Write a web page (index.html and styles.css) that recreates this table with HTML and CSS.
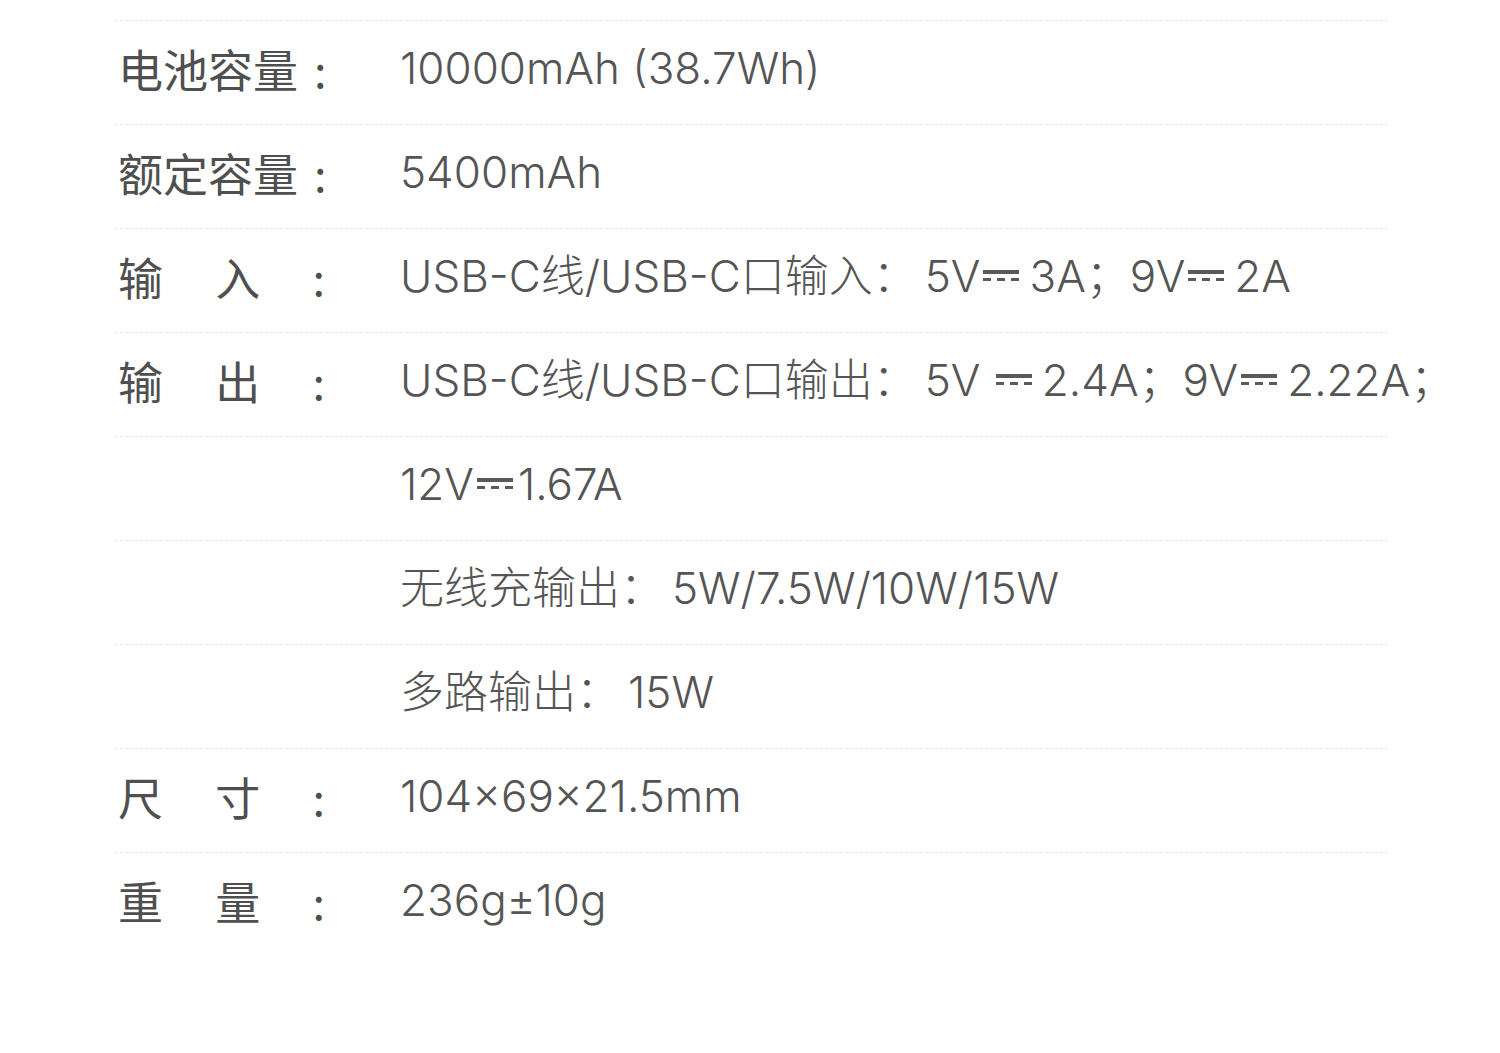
FILE: index.html
```html
<!DOCTYPE html>
<html lang="zh-CN">
<head>
<meta charset="utf-8">
<link rel="stylesheet" href="styles.css">
</head>
<body>
<div class="specs">
  <div class="row">
    <div class="label"><span>电池容量</span><span class="colon">:</span></div>
    <div class="value">10000mAh (38.7Wh)</div>
  </div>
  <div class="row">
    <div class="label"><span>额定容量</span><span class="colon">:</span></div>
    <div class="value">5400mAh</div>
  </div>
  <div class="row">
    <div class="label spread"><span>输</span><span>入</span><span>:</span></div>
    <div class="value">USB-C线/USB-C口输入：<span class="gap"></span>5V<i class="dc"></i>3A；9V<i class="dc"></i>2A</div>
  </div>
  <div class="row">
    <div class="label spread"><span>输</span><span>出</span><span>:</span></div>
    <div class="value">USB-C线/USB-C口输出：<span class="gap"></span>5V <i class="dc"></i>2.4A；9V<i class="dc"></i>2.22A；</div>
  </div>
  <div class="row">
    <div class="label"></div>
    <div class="value">12V<i class="dc tight"></i>1.67A</div>
  </div>
  <div class="row">
    <div class="label"></div>
    <div class="value">无线充输出：<span class="gap"></span>5W/7.5W/10W/15W</div>
  </div>
  <div class="row">
    <div class="label"></div>
    <div class="value">多路输出：<span class="gap"></span>15W</div>
  </div>
  <div class="row">
    <div class="label spread"><span>尺</span><span>寸</span><span>:</span></div>
    <div class="value">104×69×21.5mm</div>
  </div>
  <div class="row last">
    <div class="label spread"><span>重</span><span>量</span><span>:</span></div>
    <div class="value">236g±10g</div>
  </div>
</div>
</body>
</html>
```
FILE: styles.css
```css
html, body {
  margin: 0;
  padding: 0;
  background: #ffffff;
}
body {
  font-family: "Inter", "Noto Sans CJK SC", sans-serif;
  font-weight: 300;
  color: #555555;
  overflow: hidden;
}
.specs {
  padding-top: 20px;
  margin-left: 115px;
  width: 1273px;
}
.row {
  display: flex;
  align-items: center;
  height: 104px;
  padding-bottom: 8px;
  box-sizing: border-box;
  border-top: 1px dashed #e4e4e4;
  font-size: 44px;
  line-height: 1.2;
  white-space: nowrap;
}
.label {
  display: flex;
  width: 211px;
  margin-left: 3px;
  margin-right: 71px;
  flex: none;
  font-family: "Noto Sans CJK SC", sans-serif;
  font-size: 45px;
  font-weight: 400;
  color: #4f4f4f;
}
.label .colon {
  margin-left: 16px;
}
.label.spread {
  justify-content: space-between;
  padding-right: 4px;
  box-sizing: border-box;
}
.value {
  flex: none;
}
.gap {
  display: inline-block;
  width: 8px;
}
.dc {
  display: inline-block;
  width: 36px;
  height: 11px;
  margin: 0 10px 0 3px;
  vertical-align: 0.26em;
  border-top: 4px solid #5a5a5a;
  background: repeating-linear-gradient(to right, #5a5a5a 0 8px, transparent 8px 14px) bottom / 100% 3px no-repeat;
  box-sizing: border-box;
}
.dc.tight {
  margin: 0 5px 0 3px;
}
```
